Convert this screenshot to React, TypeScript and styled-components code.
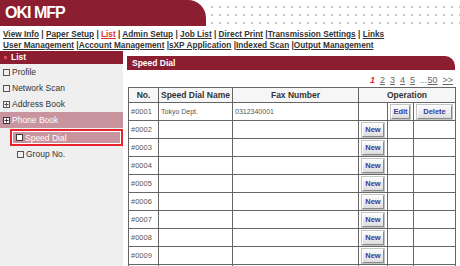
import React from "react";
import styled, { createGlobalStyle } from "styled-components";

const GlobalStyle = createGlobalStyle`
  html, body {
    margin: 0;
    padding: 0;
    background: #ffffff;
  }
  body {
    width: 460px;
    height: 266px;
    overflow: hidden;
    font-family: "Liberation Sans", Arial, sans-serif;
  }
`;

const navTop = [
  { label: "View Info" },
  { label: "Paper Setup" },
  { label: "List", active: true },
  { label: "Admin Setup" },
  { label: "Job List" },
  { label: "Direct Print", tight: true },
  { label: "Transmission Settings" },
  { label: "Links" },
];

const navBottom = [
  "User Management",
  "Account Management",
  "sXP Application",
  "Indexed Scan",
  "Output Management",
];

const menu = [
  { label: "Profile", icon: "box", level: 0 },
  { label: "Network Scan", icon: "box", level: 0 },
  { label: "Address Book", icon: "plus", level: 0 },
  { label: "Phone Book", icon: "plus", level: 0, open: true },
  { label: "Speed Dial", icon: "box", level: 1, selected: true },
  { label: "Group No.", icon: "box", level: 1 },
];

const entries = Array.from({ length: 10 }, (_, i) => ({
  no: `#${String(i + 1).padStart(4, "0")}`,
  name: i === 0 ? "Tokyo Dept." : "",
  fax: i === 0 ? "0312340001" : "",
}));

const Page = styled.div`
  width: 460px;
  height: 266px;
  display: flex;
  flex-direction: column;
  overflow: hidden;
`;

const Header = styled.div`
  height: 26px;
  display: flex;
  flex-shrink: 0;
`;

const Brand = styled.div`
  width: 206px;
  background: #8b1e30;
  border-top-right-radius: 18px;
  color: #ffffff;
  font-weight: bold;
  font-size: 16px;
  letter-spacing: -1px;
  padding-left: 5px;
  line-height: 26px;
  box-sizing: border-box;
`;

const Dots = styled.div`
  flex: 1;
  background-image: radial-gradient(circle, #c8c8c8 0.8px, transparent 1px);
  background-size: 8px 8px;
  background-position: 2px 3px;
`;

const Nav = styled.div`
  padding: 3px 3px 0;
  height: 25px;
  box-sizing: border-box;
  flex-shrink: 0;
`;

const NavLine = styled.div`
  font-size: 8.25px;
  font-weight: bold;
  line-height: 11px;
  color: #333333;
  white-space: nowrap;
`;

const NavLink = styled.span<{ $active?: boolean }>`
  text-decoration: underline;
  color: ${(p) => (p.$active ? "#e0302a" : "#333333")};
`;

const Body = styled.div`
  flex: 1;
  display: flex;
  min-height: 0;
`;

const Sidebar = styled.div`
  width: 123px;
  background: #efefef;
  flex-shrink: 0;
`;

const SideHead = styled.div`
  height: 13px;
  background: #8b1e30;
  color: #ffffff;
  font-size: 8.5px;
  font-weight: bold;
  line-height: 13px;
  padding-left: 4px;
  display: flex;
  align-items: center;
  gap: 4px;
`;

const Bullet = styled.span`
  width: 3px;
  height: 3px;
  background: #e0485a;
`;

const SideList = styled.div`
  display: flex;
  flex-direction: column;
`;

const SideItem = styled.div<{ $level: number; $open?: boolean; $selected?: boolean }>`
  height: ${(p) => (p.$selected ? "17px" : "16px")};
  margin-left: ${(p) => (p.$selected ? "10px" : "0")};
  margin-top: ${(p) => (p.$selected ? "1px" : "0")};
  padding-left: ${(p) => (p.$selected ? "4px" : p.$level ? "17px" : "3px")};
  display: flex;
  align-items: center;
  gap: 2px;
  font-size: 8.5px;
  box-sizing: border-box;
  color: ${(p) => (p.$open || p.$selected ? "#ffffff" : "#333333")};
  background: ${(p) => (p.$open || p.$selected ? "#c8949e" : "transparent")};
  border: ${(p) => (p.$selected ? "2px solid #e8232a" : "none")};
  box-shadow: ${(p) => (p.$selected ? "inset 0 0 0 1px #ffffff" : "none")};
`;

const Main = styled.div`
  flex: 1;
  padding: 5px 5px 0 4px;
  display: flex;
  flex-direction: column;
  min-width: 0;
`;

const PanelHead = styled.div`
  height: 14px;
  flex-shrink: 0;
  background: #8b1e30;
  border-top-right-radius: 10px;
  color: #ffffff;
  font-size: 8.5px;
  font-weight: bold;
  line-height: 14px;
  padding-left: 5px;
`;

const Pager = styled.div`
  height: 17px;
  flex-shrink: 0;
  display: flex;
  justify-content: flex-end;
  align-items: flex-end;
  gap: 5px;
  padding: 0 2px 2px 0;
  box-sizing: border-box;
  font-size: 9px;
  line-height: 10px;
  color: #666666;
`;

const PageLink = styled.span<{ $current?: boolean }>`
  text-decoration: ${(p) => (p.$current ? "none" : "underline")};
  color: ${(p) => (p.$current ? "#e8232a" : "#666666")};
  font-weight: ${(p) => (p.$current ? "bold" : "normal")};
  font-style: ${(p) => (p.$current ? "italic" : "normal")};
`;

const Table = styled.table`
  border-collapse: collapse;
  width: 327px;
  margin-left: 1px;
  table-layout: fixed;
  border: 1px solid #555555;
  font-size: 8px;
`;

const Th = styled.th`
  height: 14px;
  padding: 0;
  border: 1px solid #666666;
  background: #f6f6f6;
  font-size: 8.5px;
  line-height: 10px;
  color: #333333;
  text-align: center;
`;

const Td = styled.td<{ $small?: boolean }>`
  height: 17px;
  padding: 0 0 0 2px;
  border: 1px solid #666666;
  font-size: ${(p) => (p.$small ? "7px" : "7.5px")};
  line-height: 10px;
  color: #555555;
  white-space: nowrap;
  overflow: hidden;
`;

const BtnCell = styled.td`
  height: 17px;
  padding: 0;
  border: 1px solid #666666;
  text-align: center;
  font-size: 8px;
  line-height: 10px;
`;

const Button = styled.button<{ $w: number }>`
  width: ${(p) => p.$w}px;
  height: 14px;
  padding: 0;
  display: inline-block;
  font-family: "Liberation Sans", Arial, sans-serif;
  font-size: 7.5px;
  line-height: 10px;
  font-weight: bold;
  color: #3a3a9a;
  background: linear-gradient(#fbfbfb, #dedede);
  border: 1px solid;
  border-color: #ffffff #8a8a8a #8a8a8a #ffffff;
  box-shadow: 0 0 0 1px #c4c4c4;
  vertical-align: middle;
`;

function MenuIcon({ kind, dark }: { kind: string; dark?: boolean }) {
  const stroke = dark ? "#3a3a3a" : "#555555";
  return (
    <svg width="7" height="7" viewBox="0 0 7 7">
      <rect x="0.5" y="0.5" width="6" height="6" fill={dark ? "#ffffff" : "none"} stroke={stroke} />
      {kind === "plus" && <path d="M1.5 3.5h4M3.5 1.5v4" stroke={stroke} />}
    </svg>
  );
}

export default function App() {
  return (
    <Page>
      <GlobalStyle />
      <Header>
        <Brand>OKI MFP</Brand>
        <Dots />
      </Header>
      <Nav>
        <NavLine>
          {navTop.map((n, i) => (
            <React.Fragment key={n.label}>
              <NavLink $active={n.active}>{n.label}</NavLink>
              {i < navTop.length - 1 && (n.tight ? " |" : " | ")}
            </React.Fragment>
          ))}
        </NavLine>
        <NavLine>
          {navBottom.map((label, i) => (
            <React.Fragment key={label}>
              <NavLink>{label}</NavLink>
              {i < navBottom.length - 1 && " |"}
            </React.Fragment>
          ))}
        </NavLine>
      </Nav>
      <Body>
        <Sidebar>
          <SideHead>
            <Bullet />
            List
          </SideHead>
          <SideList>
            {menu.map((m) => (
              <SideItem key={m.label} $level={m.level} $open={m.open} $selected={m.selected}>
                <MenuIcon kind={m.icon} dark={m.open || m.selected} />
                {m.label}
              </SideItem>
            ))}
          </SideList>
        </Sidebar>
        <Main>
          <PanelHead>Speed Dial</PanelHead>
          <Pager>
            <PageLink $current>1</PageLink>
            <PageLink>2</PageLink>
            <PageLink>3</PageLink>
            <PageLink>4</PageLink>
            <PageLink>5</PageLink>
            <span>
              ...<PageLink>50</PageLink>
            </span>
            <PageLink>&gt;&gt;</PageLink>
          </Pager>
          <Table>
            <colgroup>
              <col style={{ width: 30 }} />
              <col style={{ width: 74 }} />
              <col style={{ width: 126 }} />
              <col style={{ width: 29 }} />
              <col style={{ width: 26 }} />
              <col style={{ width: 42 }} />
            </colgroup>
            <thead>
              <tr>
                <Th>No.</Th>
                <Th>Speed Dial Name</Th>
                <Th>Fax Number</Th>
                <Th colSpan={3}>Operation</Th>
              </tr>
            </thead>
            <tbody>
              {entries.map((e, i) => (
                <tr key={e.no}>
                  <Td>{e.no}</Td>
                  <Td $small>{e.name}</Td>
                  <Td $small>{e.fax}</Td>
                  {i === 0 ? (
                    <>
                      <BtnCell />
                      <BtnCell>
                        <Button $w={19}>Edit</Button>
                      </BtnCell>
                      <BtnCell>
                        <Button $w={35}>Delete</Button>
                      </BtnCell>
                    </>
                  ) : (
                    <>
                      <BtnCell>
                        <Button $w={22}>New</Button>
                      </BtnCell>
                      <BtnCell />
                      <BtnCell />
                    </>
                  )}
                </tr>
              ))}
            </tbody>
          </Table>
        </Main>
      </Body>
    </Page>
  );
}
